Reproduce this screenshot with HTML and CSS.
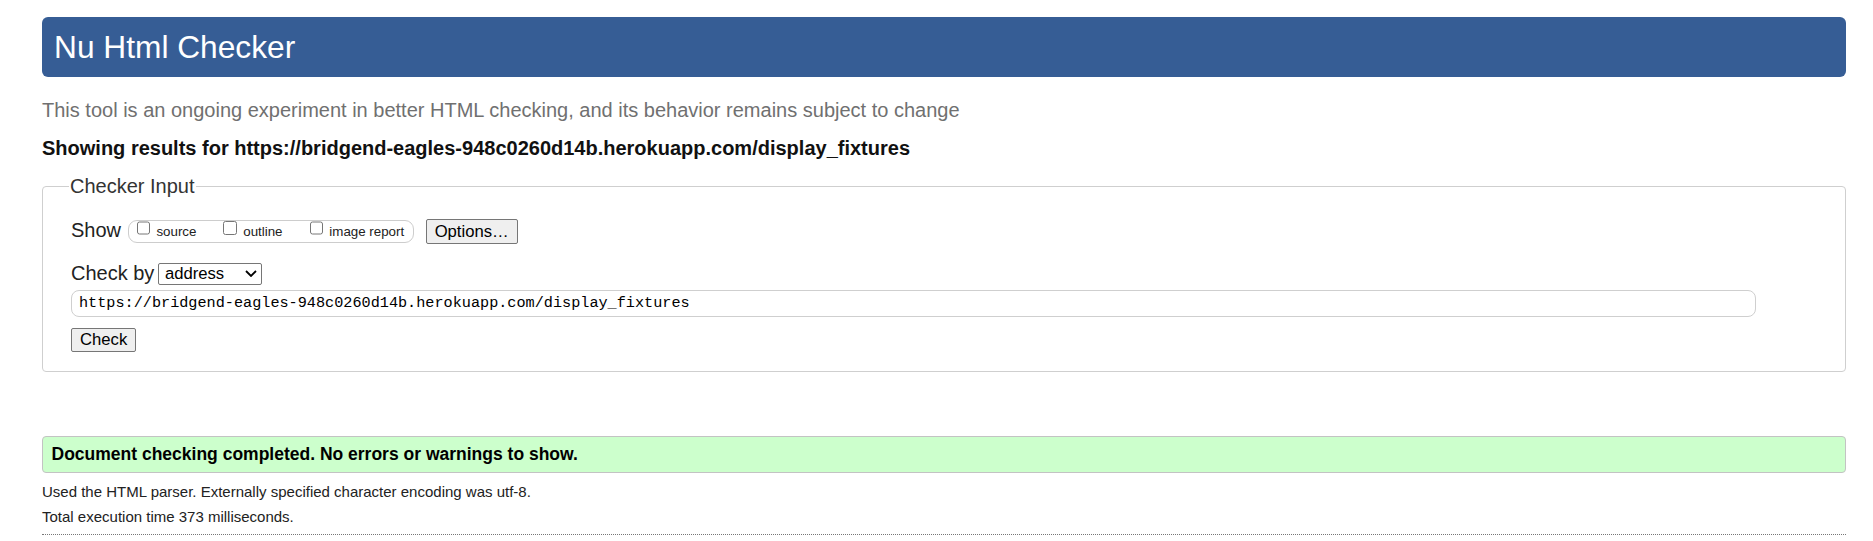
FILE: index.html
```html
<!DOCTYPE html>
<html lang="en">
<head>
<meta charset="utf-8">
<title>Nu Html Checker</title>
<link rel="stylesheet" href="styles.css">
</head>
<body>
<h1 class="title">Nu Html Checker</h1>
<p class="about">This tool is an ongoing experiment in better HTML checking, and its behavior remains subject to change</p>
<p class="showing">Showing results for https://bridgend-eagles-948c0260d14b.herokuapp.com/display_fixtures</p>
<fieldset class="checker">
  <legend class="legend">Checker Input</legend>
  <div class="row show-row">
    <span class="label show-label">Show</span>
    <div class="show-options">
      <label class="opt"><input type="checkbox" class="cb"><span class="opt-text">source</span></label>
      <label class="opt"><input type="checkbox" class="cb"><span class="opt-text">outline</span></label>
      <label class="opt"><input type="checkbox" class="cb"><span class="opt-text">image report</span></label>
    </div>
    <button class="btn options-btn" type="button">Options…</button>
  </div>
  <div class="row by-row">
    <span class="label">Check by</span>
    <div class="select">
      <span class="select-text">address</span>
      <svg class="chevron" width="12" height="7" viewBox="0 0 12 7"><path d="M1 1l5 5 5-5" fill="none" stroke="#000" stroke-width="1.8"/></svg>
    </div>
  </div>
  <input class="url" type="url" value="https://bridgend-eagles-948c0260d14b.herokuapp.com/display_fixtures">
  <button class="btn check-btn" type="button">Check</button>
</fieldset>
<p class="success">Document checking completed. No errors or warnings to show.</p>
<p class="details details-first">Used the HTML parser. Externally specified character encoding was utf-8.</p>
<p class="details details-second">Total execution time 373 milliseconds.</p>
<hr class="rule">
</body>
</html>
```
FILE: styles.css
```css
body {
  margin: 0;
  padding: 17px 27px 0 42px;
  font-family: "Liberation Sans", Arial, sans-serif;
  font-size: 20px;
  color: #111;
  background: #fff;
}

.title {
  margin: 0;
  height: 60px;
  line-height: 60px;
  padding: 0 12px;
  font-size: 31.7px;
  font-weight: normal;
  color: #fff;
  background: #365d95;
  border-radius: 6px;
}

.about {
  margin: 22px 0 0;
  line-height: 23px;
  color: #707070;
}

.showing {
  margin: 15px 0 0;
  line-height: 23px;
  font-weight: bold;
  color: #111;
}

.checker {
  margin: 15px 0 0;
  padding: 21px 28px 18.5px;
  border: 1px solid #cfcfcf;
  border-radius: 4px;
  min-width: 0;
}

.legend {
  padding: 0 1px;
  margin-left: -2px;
  line-height: 23px;
  color: #333;
}

.row {
  display: flex;
  align-items: center;
}

.show-row {
  height: 25px;
}

.label {
  line-height: 23px;
  color: #222;
}

.show-label {
  margin-bottom: 3px;
}

.show-options {
  display: flex;
  align-items: center;
  gap: 27px;
  height: 21px;
  margin-left: 6.6px;
  padding: 0 9px 0 8px;
  border: 1px solid #cdcdcd;
  border-radius: 9px;
  font-size: 13.33px;
  color: #222;
}

.opt {
  display: flex;
  align-items: center;
}

.cb {
  width: 13.3px;
  height: 13.3px;
  margin: 0 6.5px 7px 0;
}

.opt-text {
  line-height: 15px;
}

.btn {
  font-family: inherit;
  font-size: 16.67px;
  padding: 0 8px;
  border: 1px solid #767676;
  border-radius: 2px;
  background: #efefef;
  color: #000;
}

.options-btn {
  margin-left: 11.5px;
  height: 25px;
}

.by-row {
  margin-top: 18px;
}

.select {
  display: flex;
  align-items: center;
  justify-content: space-between;
  box-sizing: border-box;
  width: 104px;
  height: 22px;
  margin-left: 4px;
  padding: 0 4px 0 5.5px;
  border: 1px solid #767676;
  border-radius: 2px;
  background: #fff;
  font-size: 16.67px;
  color: #000;
}

.chevron {
  display: block;
}

.url {
  display: block;
  box-sizing: border-box;
  width: calc(100% - 61px);
  height: 27px;
  margin: 4.6px 0 0;
  padding: 0 7px;
  border: 1px solid #cfcfcf;
  border-radius: 8px;
  font-family: "Liberation Mono", monospace;
  font-size: 15.2px;
  color: #000;
  background: #fff;
}

.check-btn {
  display: block;
  margin-top: 11px;
  height: 24.5px;
}

.success {
  margin: 64px 0 0;
  padding: 7.5px 8.5px 8px;
  line-height: 20px;
  font-size: 17.5px;
  font-weight: bold;
  color: #000;
  background: #ccffcc;
  border: 1px solid #c3c3c3;
  border-radius: 4px;
}

.details {
  font-size: 15px;
  line-height: 17px;
  color: #222;
}

.details-first {
  margin: 9.5px 0 0;
}

.details-second {
  margin: 8.5px 0 0;
}

.rule {
  margin: 8.5px 0 0;
  border: 0;
  border-top: 1px dotted #777;
  height: 0;
}
```
